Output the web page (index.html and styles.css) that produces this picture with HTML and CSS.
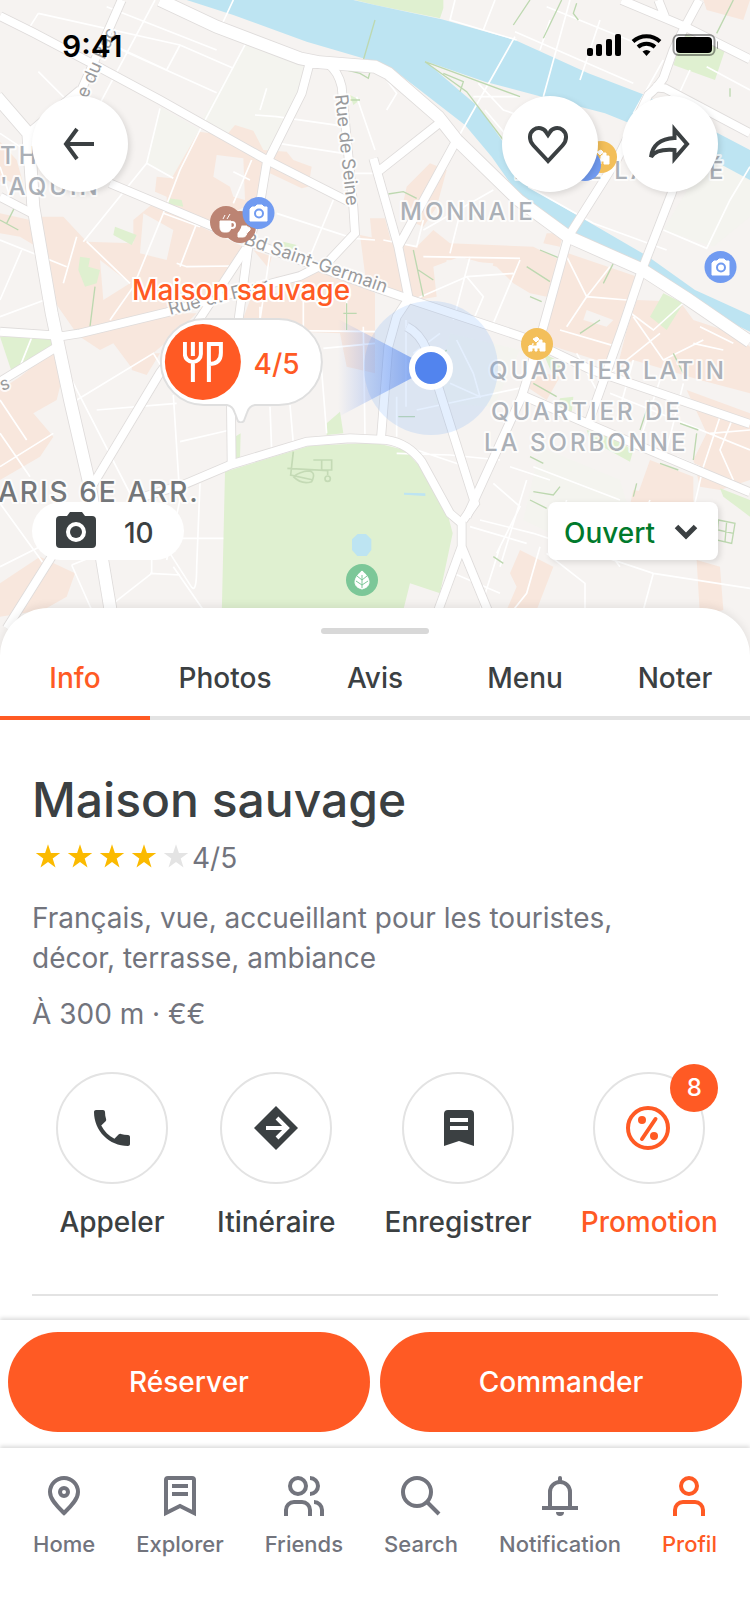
FILE: index.html
```html
<!DOCTYPE html>
<html lang="fr">
<head>
<meta charset="utf-8">
<meta name="viewport" content="width=device-width, initial-scale=1">
<title>Maison sauvage</title>
<link rel="stylesheet" href="styles.css">
</head>
<body>
<main class="screen">
  <section class="map" aria-label="Carte">
    <svg class="map-canvas" viewBox="0 0 750 660" preserveAspectRatio="xMidYMin slice" aria-hidden="true">
      <defs>
        <g id="wide">
          <path d="M480 0 650 80 900 175 960 187 1125 200 1165 220 1315 350 1370 420 1555 600 1705 710 1925 808 2060 895 2250 1025"/>
          <path d="M-10 290 85 400 100 620 155 940 210 1200 270 1460 300 1640 335 1850"/>
        </g>
        <g id="main">
          <path d="M0 48 100 98 300 203 480 300 800 480 1060 612"/>
          <path d="M365 0 330 80 235 290M85 400 240 270"/>
          <path d="M930 185 905 280 800 490 782 600 745 740 715 965"/>
          <path d="M915 192 985 192Q1015 215 1025 260L1060 620 1065 700 985 785 900 828 700 880 500 937 240 1000 190 1008 0 995"/>
          <path d="M330 550 640 680 760 730 1125 862 1235 900 1565 1010 1775 1110 2250 1272"/>
          <path d="M738 745 600 955 480 1118 275 1460M155 1670 20 1885"/>
          <path d="M1230 890 1190 950 1165 1040 1143 1315"/>
          <path d="M400 1500 560 1450 695 1393 920 1325 1050 1315 1160 1320Q1225 1330 1265 1385L1350 1540 1385 1570"/>
          <path d="M693 1215 695 1393M1220 980Q1260 1000 1280 1050L1425 1510 1390 1560"/>
          <path d="M1385 1560V1640L1315 1830M1385 1640 1465 1835"/>
          <path d="M1400 1550 1565 1190 1630 980 1705 710 1850 480 1945 285Q1970 265 1990 235L2020 150 2055 80 2098 0"/>
          <path d="M2040 500 2015 580 1925 812 1865 990 1765 1270"/>
          <path d="M1565 1185 1765 1272 1900 1330 2250 1477"/>
          <path d="M1865 0 2055 80 2250 178M1960 262 1995 265 2250 400M1975 0 1995 50"/>
          <path d="M1125 522 1320 368M1370 420 1195 740M1120 475 1195 740 1227 900"/>
          <path d="M0 590 95 640M0 1145 180 1035"/>
        </g>
      </defs>
      <g transform="scale(.333333)">
        <rect class="land" width="2250" height="1980"/>
        <g class="campus">
          <path d="M740 125 920 190 890 290 800 470 600 370zM480 320 600 390 520 530 440 490zM1965 700 2120 400 2250 520V660L2140 745z"/>
          <path d="M1620 1340 1860 1440 1920 1640 1820 1680 1570 1560zM1350 1000 1560 1050 1480 1220 1300 1210z"/>
        </g>
        <g class="built">
          <path d="M595 395 680 405 705 375 760 392 790 450 860 455 880 480 935 500 925 560 905 565 810 520 780 600 640 665 500 620 500 590 465 575 470 530 515 535z"/>
          <path d="M0 425 50 480 75 570 20 540 0 545zM0 640 90 660 110 740 60 710 0 700z"/>
          <path d="M125 650 190 650 260 725 400 730 400 660 460 610 560 660 730 740 640 880 500 930 230 1000 160 900z"/>
          <path d="M760 750 900 800 1080 850 1125 880 1125 1120 1040 1100 1020 1000 760 990 720 980 750 900 860 870z"/>
          <path d="M1080 705 1250 740 1300 690 1350 730 1600 740 1680 780 1640 890 1590 880 1540 850 1490 800 1380 770 1300 800 1310 890 1250 900 1100 860z"/>
          <path d="M1220 560 1290 490 1340 510 1310 620 1270 680 1200 650zM1110 655 1155 655 1180 750 1120 760z"/>
          <path d="M1705 760 1925 835 1870 990 1820 1090 1600 1020 1660 900zM1640 700 1690 700 1680 740 1630 730z"/>
          <path d="M1910 900 2040 905 2080 960 2200 1000 2250 1040V1180L2100 1140 1900 1080 1850 1110 1880 990zM2110 0 2250 0 2230 60 2120 30z"/>
          <path d="M2060 1170 2250 1240V1440L2160 1470 2100 1460 2080 1380 2120 1300zM1950 1380 2080 1430 2080 1530 1990 1600 1900 1520z"/>
          <path d="M1560 1650 1660 1700 1610 1830 1520 1830 1550 1760 1530 1720zM2090 1680 2160 1700 2170 1830 2100 1850z"/>
          <path d="M0 1170 60 1130 160 1050 190 1120 170 1200 100 1240 160 1310 120 1370 0 1440z"/>
          <path d="M240 1010 500 940 590 940 530 1000 400 1110 340 1030 300 1050zM400 1060 480 1060 440 1125 395 1110z"/>
          <path d="M0 1750 120 1670 225 1720 200 1790 130 1830 0 1850zM1590 1110 1680 1130 1640 1200 1580 1160z"/>
          <path d="M1900 1470 2080 1500 2080 1580 2000 1620 1880 1560z"/>
        </g>
        <g class="land">
          <path d="M650 465 730 475 735 600 700 590 690 560 640 530zM430 640 520 690 500 780 420 760zM820 750 930 780 900 830 800 830z"/>
          <path d="M1340 780 1480 790 1460 870 1320 890zM1760 930 1840 960 1820 980 1750 960zM300 780 390 850 310 900z"/>
        </g>
        <g class="green">
          <path d="M675 1415 930 1337 1125 1328 1215 1350 1260 1400 1345 1550 1358 1600 1320 1780 1230 1750 1205 1850 665 1850z"/>
          <path d="M1065 0H1330V25L1320 55 1125 15zM2050 100 2175 150 2145 240 2020 195zM1990 880 2050 910 2000 990 1950 950z"/>
          <path d="M0 1010 155 1005 160 1040 35 1115zM345 680 410 705 395 735 340 705zM240 770 270 775 265 800 300 810 290 850 255 860 235 810z"/>
          <path d="M505 595 545 600 550 620 505 612zM1050 285 1080 300 1060 315zM705 1310 722 1300 720 1375 706 1378zM980 1270 1020 1235 1030 1300 980 1305z"/>
          <path d="M1680 1195 1720 1190 1715 1240 1670 1225zM1760 1290 1830 1310 1900 1350 1890 1385 1770 1320zM2160 1465 2250 1500V1550L2170 1490zM1630 1060 1690 1090 1660 1130z"/>
          <path d="M850 725 890 735 870 755 850 740z"/>
        </g>
        <path class="water" d="M560 0 700 45 920 125 1125 185 1175 205 1395 375 1475 470 1535 555 1565 590 1705 690 1925 805 1975 850 2085 915 2250 995V450L1935 285 1765 220 1545 120 1325 58 1125 15 1060 0z"/>
        <path class="land" d="M1275 183 1455 245 1625 290 1815 340 1895 372 2155 495 2250 545V945L2085 870 1945 770 1765 665 1585 560 1505 420 1435 320z"/>
        <path class="campus" d="M2120 470 2250 540V650L2140 740 1990 690z"/>
        <path class="water" d="M1073 1602 1098 1602 1114 1618V1650L1100 1668H1072L1056 1650V1618zM1212 1478 1276 1480V1488L1212 1484z"/>
        <g class="lane">
          <path d="M115 40 90 80M115 40 540 135 700 205M320 20 650 150M540 135 500 210 350 140M365 150 650 278M465 0 300 310M740 125 610 370 540 510 490 640 400 860 330 960"/>
          <path d="M115 215 210 310M480 325 440 490 250 725M440 490 520 535M800 265 780 330M765 345 830 350 1040 380M835 430 1030 460M1070 290 1125 450M1065 520H1125"/>
          <path d="M755 480 700 610M700 515 750 540M1000 600 930 770M830 640 1060 715 1125 720M0 720 200 800M65 750 0 900M230 710 190 850M0 950 160 890M260 725 390 850"/>
          <path d="M530 790 560 800 700 798M810 760 780 960M590 670 540 800M490 640 600 680M0 400 60 440M0 500 40 620"/>
          <path d="M700 0 665 75M1545 110 1370 420M1485 0 1450 90M1365 0 1350 60 1550 120M1640 20 1960 150M1650 60 1620 150M1710 0 1630 290M1545 95 1900 250M1800 60 1740 240M1990 180 1900 340M2070 210 2010 340M2120 200 2250 270"/>
          <path d="M1435 250 1510 330 1600 360M1420 290 1560 290M1455 330 1540 430M1585 560 1780 670M1780 670 2000 750M1990 690 2120 745 2190 600 2250 500M1160 240 1190 280 1160 330"/>
          <path d="M1390 600 1350 760M1270 690 1480 570M1150 720 1250 740 1270 660M1270 770 1560 775M1410 770 1360 960M1400 830 1540 820M1560 780 1480 970M1240 900 1400 830 1450 890 1420 960"/>
          <path d="M1700 770 1760 890 1880 900M1760 890 1700 980M1760 890 1830 800M1880 930 1960 990 2060 900M1900 950 1990 1080 2110 1020M1980 1000 1830 1120M2100 980 2200 1030M2080 1030 2170 1050"/>
          <path d="M100 1000 60 1100M0 1300 90 1430M0 1400 160 1300M0 1200 80 1320M0 1510 130 1690M0 1700 220 1590M210 1130 400 1500M290 1230 530 1210M230 1200 460 1060 540 1190"/>
          <path d="M520 1185 540 1500 500 1680M870 1215 880 1330M810 1220 815 1350M960 1050 980 1300M1090 980 1095 1310M970 1045 1125 1030M730 990 1125 995M780 920V990M910 900V990M1040 990V900"/>
          <path d="M540 1325 690 1290M600 1450 590 1700Q590 1780 575 1762L510 1660M455 1680V1720L340 1810M450 1720 540 1725M215 1695 275 1830M215 1695 290 1665M540 1615H670M520 1700 610 1830"/>
          <path d="M1190 1190V1310M1218 960V1220M1240 1060 1320 1000M1250 1230 1580 1160M1190 1360 1350 1365 1500 1380M1250 1350 1400 1400M1410 1580 1580 1630M1480 1450 1560 1520 1490 1660M1530 1400 1650 1440M1600 1400 1860 1500M1580 1440 1500 1700"/>
          <path d="M1360 1720 1500 1780M1500 1640 1440 1830M1620 1640 1580 1780 1540 1830M1640 1660 1755 1750V1830M1600 1600 1960 1720 2250 1765M1960 1720 1930 1830M1800 1620 1860 1700M1700 1500 1660 1640M1950 1500 1890 1640M2200 1250 2160 1350 2200 1440M2160 1250 2110 1400 2080 1530M2130 1300 2250 1290M2030 1370 2100 1400M1440 1560 1600 1600"/>
          <path d="M1350 1150 1440 1190 1420 1120 1370 1020M1680 990 1850 1040M1730 1060 1800 1190M1900 1080 1850 1260M1980 1140 1920 1320M2050 1150 2000 1350M1830 1180 2250 1350"/>
        </g>
        <g class="path">
          <path d="M1125 60 1090 180M1020 205 1080 220 1105 235 1110 215M1050 300H1080M0 660 55 690M45 620 20 670M285 860 270 980M1040 910V990M1030 940H1070"/>
          <path d="M1275 185 1560 290M1275 185 1400 275 1510 420M1330 220 1390 245 1380 275M1540 75 1590 0M1630 115 1685 0M1730 10 1720 40 1735 60M2150 100 2200 0M2190 265V290M1165 582 1210 575 1250 595M1240 750 1270 890M1255 810 1300 840"/>
          <path d="M1620 750 1680 775M1580 800 1650 845M1590 890 1625 905M1840 790 1810 850M1600 1150 1670 1190M1590 1370 1630 1390M1600 1475 1660 1485 1680 1460M1590 1500 1640 1525M1740 1000 1800 960M2020 1060 2050 1120M2040 1270 2095 1290M2090 1300 2080 1380M1980 1390 2035 1410M1910 1450 1900 1490M1195 1250H1245M1480 1670 1510 1690M2155 1560 2205 1570 2195 1630 2150 1620zM2180 1565 2175 1625M2155 1590 2200 1600M1340 1050 1320 1070M1950 1200 1920 1290"/>
        </g>
        <path class="track" d="M880 1355 872 1425 940 1440M862 1405 985 1412M940 1380H995V1410H965V1380M880 1430Q905 1455 935 1445Q950 1415 925 1413Q900 1415 880 1430M983 1412V1425M975 1436a8 8 0 1 0 16 0a8 8 0 1 0-16 0"/>
        <use href="#wide" class="wide-edge"/>
        <use href="#main" class="main-edge"/>
        <use href="#main" class="main-fill"/>
        <use href="#wide" class="wide-fill"/>
      </g>

      <g class="street">
        <text transform="translate(87 99) rotate(-66)">e du Bac</text>
        <text transform="translate(335 95) rotate(84)">Rue de Seine</text>
        <text transform="translate(243 244) rotate(19)">Bd Saint-Germain</text>
        <text transform="translate(170 315) rotate(-14)">Rue du Four</text>
        <text transform="translate(2 391) rotate(-20)">s</text>
      </g>
      <g class="area">
        <text x="0" y="164">TH</text>
        <text x="0" y="195">'AQUIN</text>
        <text x="400" y="220">MONNAIE</text>
        <text x="514" y="179">ÎLE DE LA CITÉ</text>
        <text x="489" y="379">QUARTIER LATIN</text>
        <text x="491" y="420">QUARTIER DE</text>
        <text x="484" y="451">LA SORBONNE</text>
      </g>
      <text class="district" x="-2" y="502">ARIS 6E ARR.</text>

      <g class="poi">
        <circle class="brown" cx="240" cy="227" r="16"/>
        <path d="M238 226h9v5q0 6-4 6h-5zM247 227q4 0 3 3l-3 3"/>
        <circle class="brown" cx="226" cy="222" r="16"/>
        <path d="M220 221h11v5q0 6-4 6h-3q-4 0-4-5zM223 219l2-4M227 219l3-5"/>
        <circle class="cup-handle" cx="232" cy="225" r="3"/>
        <g id="photo-pin">
          <circle class="blue" cx="258.500" cy="213" r="16"/>
          <path d="M252 207h3l2-2h5l2 2h3v14h-17v-12z"/>
          <circle class="lens" cx="259" cy="213.500" r="4"/>
        </g>
        <use href="#photo-pin" x="462" y="54"/>
        <g id="museum-pin">
          <circle class="amber" cx="537" cy="344" r="16"/>
          <path d="M529 352v-6l4-1v-2M533 339l4-2 2 2-3 3z"/>
          <path d="M529 351v-5h8v-3l2-1v-2h3v3h3v8h-5v-3h-3v3h-2v-3h-3v3z"/>
        </g>
        <use href="#museum-pin" x="64" y="-187"/>
        <circle class="blue" cx="585" cy="165" r="16"/>
        <circle class="leaf" cx="362" cy="580" r="16"/>
        <path d="M362 571c5 4 7 8 7 11 0 4-3 6-7 7-4-1-7-3-7-7 0-3 2-7 7-11z"/>
        <path class="vein" d="M362 575v13M362 580l-5-4M362 580l5-4M362 585l-6-4M362 585l6-4"/>
      </g>

      <defs>
        <linearGradient id="beam"><stop offset="0" stop-color="#5284ee" stop-opacity="0"/><stop offset="1" stop-color="#5284ee" stop-opacity=".75"/></linearGradient>
      </defs>
      <circle class="accuracy" cx="431" cy="368" r="67"/>
      <path fill="url(#beam)" d="M338 319 431 368 338 417z"/>
      <circle class="position" cx="431" cy="368" r="19"/>
    </svg>

    <header class="status">
      <time>9:41</time>
      <svg width="132" height="24" viewBox="0 0 132 24" role="img" aria-label="Réseau, Wi-Fi, batterie">
        <rect x="1" y="14" width="6" height="8" rx="2"/><rect x="10" y="10" width="6" height="12" rx="2"/><rect x="20" y="5" width="6" height="17" rx="2"/><rect x="29" y="0" width="6" height="22" rx="2"/>
        <g class="arcs"><path d="M47 7.500a20 20 0 0 1 27 0"/><path d="M52 13a13 13 0 0 1 17 0"/></g>
        <path d="M56.500 17.500a6.500 6.500 0 0 1 8 0l-4 4.500z"/>
        <rect class="cell" x="87.500" y="1" width="41" height="20" rx="5"/><rect x="90" y="3" width="36" height="16" rx="4"/><path class="cap" d="M131 7c3 2 3 6 0 8z"/>
      </svg>
    </header>

    <div class="toolbar">
      <button class="round" type="button" aria-label="Retour"><svg class="icon" viewBox="0 0 40 40"><path d="M34 20H7M17 5 6 20l11 15"/></svg></button>
      <div class="toolbar-end">
        <button class="round" type="button" aria-label="Favori"><svg class="icon" viewBox="2 0 40 40"><path d="M20 37 5.500 21.500C.500 16 1 9 5.500 5.800 10 2.600 16 4 18 8l2 3 2-3c2-4 8-5.400 12.500-2.200 4.500 3.200 5 10.200 0 15.700z"/></svg></button>
        <button class="round" type="button" aria-label="Partager"><svg class="icon" viewBox="2 0 40 40"><path d="M26.500 5.500 39 20 26.500 34.500V26C14 25 6 28 3 33 4 22 12 14.500 26.500 14z"/></svg></button>
      </div>
    </div>

    <div class="place">
      <span class="place-name">Maison sauvage</span>
      <button class="bubble" type="button" aria-label="Maison sauvage, 4/5">
        <svg class="bubble-shape" viewBox="0 0 163 105" aria-hidden="true"><path d="M44 1h75a43 43 0 0 1 0 86H95q-6 1-8 8l-3 8q-3 3-6 0l-3-8q-2-7-8-8H44a43 43 0 0 1 0-86z"/></svg>
        <span class="bubble-disc"><svg viewBox="0 0 40 40" aria-hidden="true"><path d="M2 0v12a8 8 0 0 0 16 0V0M10 0v14M10 20v20M26 40V2h12v9c0 7-4 11-12 11"/></svg></span>
        <span class="bubble-score">4/5</span>
      </button>
    </div>

    <div class="map-foot">
      <button class="photos" type="button" aria-label="10 photos">
        <svg viewBox="0 0 40 36" aria-hidden="true"><path fill-rule="evenodd" d="M4 4h7l3-4h12l3 4h7a4 4 0 0 1 4 4v24a4 4 0 0 1-4 4H4a4 4 0 0 1-4-4V8a4 4 0 0 1 4-4zM20 10a10 10 0 1 0 0 20 10 10 0 1 0 0-20z"/><circle cx="20" cy="20" r="6"/></svg>
        <span>10</span>
      </button>
      <div class="hours">
        <select aria-label="Horaires"><option>Ouvert</option><option>Fermé</option></select>
        <svg viewBox="0 0 24 24" aria-hidden="true"><path d="M2.500 6.500 12 16l9.500-9.500"/></svg>
      </div>
    </div>
  </section>

  <section class="sheet">
    <div class="handle"></div>
    <nav class="tabs" aria-label="Rubriques">
      <a class="tab tab-on" href="#info" aria-current="page">Info</a>
      <a class="tab" href="#photos">Photos</a>
      <a class="tab" href="#avis">Avis</a>
      <a class="tab" href="#menu">Menu</a>
      <a class="tab" href="#noter">Noter</a>
    </nav>

    <div class="details" id="info">
      <h1>Maison sauvage</h1>
      <div class="rating">
        <svg class="stars" viewBox="0 0 160 40" aria-hidden="true">
          <defs><path id="star" d="M16 6.200 18.900 15H28.200L20.700 20.500 23.500 29.400 16 23.900 8.500 29.400 11.300 20.500 3.800 15H13.100z"/></defs>
          <use href="#star"/><use href="#star" x="32"/><use href="#star" x="64"/><use href="#star" x="96"/><use class="star-off" href="#star" x="128"/>
        </svg>
        <span>4/5</span>
      </div>
      <p class="about">Français, vue, accueillant pour les touristes, décor, terrasse, ambiance</p>
      <p class="distance">À 300 m · €€</p>

      <div class="actions">
        <button class="action" type="button">
          <span class="ring"><svg viewBox="0 0 48 48" aria-hidden="true"><path transform="scale(2)" d="M6.620 10.790c1.440 2.830 3.760 5.140 6.590 6.590l2.200-2.200c.270-.270.670-.360 1.020-.240 1.120.370 2.330.570 3.570.570.550 0 1 .450 1 1V20c0 .550-.450 1-1 1C10.610 21 3 13.390 3 4c0-.550.450-1 1-1h3.500c.550 0 1 .450 1 1 0 1.250.200 2.450.570 3.570.110.350.030.740-.250 1.020z"/></svg></span>
          <span>Appeler</span>
        </button>
        <button class="action" type="button">
          <span class="ring"><svg viewBox="0 0 48 48" aria-hidden="true"><path d="M24 2 46 24 24 46 2 24z"/><path class="cut" d="M14 24h21M25 14l10 10-10 10"/></svg></span>
          <span>Itinéraire</span>
        </button>
        <button class="action" type="button">
          <span class="ring"><svg viewBox="0 0 48 48" aria-hidden="true"><path d="M10 42V10a4 4 0 0 1 4-4h22a4 4 0 0 1 4 4v32l-15-5z"/><path class="cut" d="M16 16h18M16 24h18"/></svg></span>
          <span>Enregistrer</span>
        </button>
        <button class="action action-hot" type="button">
          <span class="ring"><svg viewBox="1 0 48 48" aria-hidden="true"><circle class="line" cx="24" cy="24" r="20"/><path class="line" d="M31.500 15 18 35"/><circle cx="18" cy="16" r="4"/><circle cx="30" cy="32" r="4"/></svg><span class="badge">8</span></span>
          <span>Promotion</span>
        </button>
      </div>
      <hr>
    </div>
  </section>

  <div class="order">
    <button type="button">Réserver</button>
    <button type="button">Commander</button>
  </div>

  <nav class="bottom" aria-label="Navigation">
    <a href="#home"><svg class="icon" viewBox="0 0 40 40" aria-hidden="true"><path d="M20 37C15 32 6 24 6 16a14 14 0 0 1 28 0c0 8-9 16-14 21z"/><circle cx="20" cy="16" r="4"/></svg>Home</a>
    <a href="#explorer"><svg class="icon" viewBox="0 0 40 40" aria-hidden="true"><path d="M6 37V4q0-2 2-2h24q2 0 2 2v33l-14-7zM12 10h16M12 18h16"/></svg>Explorer</a>
    <a href="#friends"><svg class="icon" viewBox="0 0 40 40" aria-hidden="true"><circle cx="14" cy="10" r="8"/><path d="M26 2a8 8 0 0 1 0 16M2 40v-6a8 8 0 0 1 8-8h8a8 8 0 0 1 8 8v6M30 26a8 8 0 0 1 8 8v6"/></svg>Friends</a>
    <a href="#search"><svg class="icon" viewBox="0 0 40 40" aria-hidden="true"><circle cx="16" cy="16" r="14"/><path d="M26 26l12 12"/></svg>Search</a>
    <a href="#notification"><svg class="icon" viewBox="0 0 40 40" aria-hidden="true"><path d="M10 32V16a10 10 0 0 1 20 0v16M2 32h36"/><path d="M20 2v4" stroke-linecap="round"/><path class="solid" d="M16 36h8a4 4 0 0 1-8 0z"/></svg>Notification</a>
    <a class="here" href="#profil" aria-current="page"><svg class="icon" viewBox="0 0 40 40" aria-hidden="true"><circle cx="20" cy="10" r="8"/><path d="M6 40v-6a8 8 0 0 1 8-8h12a8 8 0 0 1 8 8v6"/></svg>Profil</a>
  </nav>
</main>
</body>
</html>
```

FILE: styles.css
```css
:root {
  --ink: #3b4042;
  --muted: #72747d;
  --accent: #ff5a24;
  --rule: #e3e3e3;
}

* { box-sizing: border-box; }

body {
  margin: 0;
  background: #fff;
  color: var(--ink);
  font-family: Inter, "Liberation Sans", sans-serif;
  font-size: 28px;
  font-weight: 500;
  line-height: 40px;
}

button, select {
  border: 0;
  padding: 0;
  background: none;
  color: inherit;
  font: inherit;
}

a { color: inherit; text-decoration: none; }
svg { display: block; }

.screen {
  display: flex;
  flex-direction: column;
  min-height: 100vh;
}

/* Map */
.map {
  position: relative;
  display: flex;
  flex-direction: column;
  height: 656px;
  overflow: hidden;
}

.map-canvas {
  position: absolute;
  inset: 0;
  width: 100%;
  height: 660px;
}

.land { fill: #f6f3f1; }
.campus { fill: #f4f4ef; }
.built { fill: #f8e7dd; }
.green { fill: #dff0d0; }
.water { fill: #bde4f2; }
.lane { fill: none; stroke: #fff; stroke-width: 5; }
.path { fill: none; stroke: #bdd8b0; stroke-width: 4; }
.track { fill: none; stroke: #c4dab5; stroke-width: 5; }
.wide-edge { fill: none; stroke: #dfdcdb; stroke-width: 41; }
.wide-fill { fill: none; stroke: #fff; stroke-width: 36; }
.main-edge { fill: none; stroke: #dfdcdb; stroke-width: 29; }
.main-fill { fill: none; stroke: #fff; stroke-width: 24; }

.street, .area, .district {
  stroke: #fff;
  stroke-opacity: .8;
  stroke-width: 4;
  stroke-linejoin: round;
  paint-order: stroke;
}

.street { fill: #9a9b9d; font-size: 18px; font-weight: 400; }
.area { fill: #abb0b7; font-size: 24px; letter-spacing: 3px; }
.district { fill: #74777a; font-size: 28px; letter-spacing: 2px; }

.poi path { fill: #fff; stroke: #fff; }
.poi .brown { fill: #bc8473; }
.poi .blue { fill: #719bf1; }
.poi .amber { fill: #f3bf5a; }
.poi .leaf { fill: #7cc798; }
.poi .lens { fill: #fff; stroke: #719bf1; stroke-width: 2; }
.poi .cup-handle { fill: none; stroke: #fff; stroke-width: 2; }
.poi .vein { fill: none; stroke: #7cc798; }

.accuracy { fill: #76b0fa; fill-opacity: .2; }
.position { fill: #5284ee; stroke: #fff; stroke-width: 6; }

.status {
  position: relative;
  display: flex;
  justify-content: space-between;
  align-items: center;
  height: 96px;
  padding: 0 32px 4px 62px;
  color: #000;
  font-size: 30px;
  font-weight: 600;
}

.status .arcs { fill: none; stroke: #000; stroke-width: 4; }
.status .cell { fill: none; stroke: #000; stroke-opacity: .4; stroke-width: 2; }
.status .cap { fill-opacity: .4; }

.toolbar {
  position: relative;
  display: flex;
  justify-content: space-between;
  padding: 0 32px;
}

.toolbar-end { display: flex; gap: 24px; }

.round {
  display: grid;
  place-items: center;
  width: 96px;
  height: 96px;
  border-radius: 50%;
  background: #fff;
  box-shadow: 2px 2px 6px rgba(0, 0, 0, .12);
}

.icon {
  width: 40px;
  height: 40px;
  overflow: visible;
  fill: none;
  stroke: currentColor;
  stroke-width: 4;
}

.icon .solid { fill: currentColor; stroke: none; }

/* Pin placed on the map canvas */
.place {
  position: absolute;
  top: 270px;
  left: calc(50% - 134px);
  display: flex;
  flex-direction: column;
  align-items: center;
  gap: 8px;
  color: var(--accent);
  transform: translateX(-50%);
}

.place-name {
  white-space: nowrap;
  -webkit-text-stroke: 4px #fff;
  paint-order: stroke fill;
}

.bubble {
  position: relative;
  display: flex;
  align-items: center;
  gap: 13px;
  width: 163px;
  height: 105px;
  padding: 0 0 17px 5px;
}

.bubble-shape {
  position: absolute;
  inset: 0;
  fill: #fff;
  stroke: #dfdfdf;
  stroke-width: 2;
}

.bubble-disc {
  position: relative;
  display: grid;
  place-items: center;
  width: 76px;
  height: 76px;
  border-radius: 50%;
  background: var(--accent);
}

.bubble-disc svg {
  width: 40px;
  height: 40px;
  fill: none;
  stroke: #fff;
  stroke-width: 4;
}

.bubble-score { position: relative; padding-top: 4px; }

.map-foot {
  position: relative;
  display: flex;
  justify-content: space-between;
  margin-top: auto;
  padding: 0 32px 96px;
}

.photos {
  display: flex;
  align-items: center;
  gap: 28px;
  height: 58px;
  padding: 4px 30px 0 24px;
  border-radius: 29px;
  background: #fff;
}

.photos svg { width: 40px; height: 36px; fill: var(--ink); margin-bottom: 6px; }

.hours { position: relative; display: flex; }

.hours select {
  width: 170px;
  height: 58px;
  padding: 4px 16px 0;
  border-radius: 8px;
  background: #fff;
  box-shadow: 2px 2px 6px rgba(0, 0, 0, .12);
  color: #007a2c;
  appearance: none;
}

.hours svg {
  position: absolute;
  top: 18px;
  right: 20px;
  width: 24px;
  height: 24px;
  fill: none;
  stroke: var(--ink);
  stroke-width: 5;
  pointer-events: none;
}

/* Sheet */
.sheet {
  position: relative;
  flex: 1;
  margin-top: -48px;
  border-radius: 48px 48px 0 0;
  background: #fff;
  box-shadow: 0 -2px 8px rgba(0, 0, 0, .08);
}

.sheet::before { content: ""; display: table; }

.handle {
  width: 108px;
  height: 6px;
  margin: 20px auto 0;
  border-radius: 3px;
  background: #d8d8d8;
}

.tabs {
  display: grid;
  grid-template-columns: repeat(5, 1fr);
}

.tab {
  padding: 24px 0 18px;
  border-bottom: 4px solid var(--rule);
  text-align: center;
}

.tab-on { border-color: var(--accent); color: var(--accent); }

.details { padding: 48px 32px 24px; }

h1 {
  margin: 0 0 6px;
  font-size: 48px;
  font-weight: 500;
  line-height: 64px;
}

.rating {
  display: flex;
  align-items: center;
  color: var(--muted);
  font-weight: 400;
}

.stars { width: 160px; height: 40px; fill: #fbba00; }
.star-off { fill: #e4e4e4; }

.about, .distance { margin: 0; color: var(--muted); font-weight: 400; }
.about { max-width: 620px; margin-top: 20px; }
.distance { margin-top: 16px; }

.actions {
  display: flex;
  justify-content: space-between;
  margin-top: 38px;
  padding-left: 24px;
}

.action {
  display: flex;
  flex-direction: column;
  align-items: center;
  gap: 18px;
  min-width: 112px;
}

.action-hot { color: var(--accent); }

.ring {
  position: relative;
  display: grid;
  place-items: center;
  width: 112px;
  height: 112px;
  border: 2px solid var(--rule);
  border-radius: 50%;
}

.ring svg { width: 48px; height: 48px; fill: currentColor; }
.ring .cut { fill: none; stroke: #fff; stroke-width: 4; }
.ring .line { fill: none; stroke: currentColor; stroke-width: 4; stroke-linecap: round; }

.badge {
  position: absolute;
  top: -10px;
  right: -15px;
  width: 48px;
  height: 48px;
  border-radius: 50%;
  background: var(--accent);
  color: #fff;
  font-size: 24px;
  line-height: 48px;
  text-align: center;
}

hr {
  height: 2px;
  margin: 52px 0 0;
  border: 0;
  background: var(--rule);
}

.order {
  position: relative;
  display: grid;
  grid-template-columns: 1fr 1fr;
  gap: 10px;
  padding: 12px 8px 16px;
  background: #fff;
  box-shadow: 0 -2px 4px rgba(0, 0, 0, .14);
}

.order button {
  height: 100px;
  border-radius: 50px;
  background: var(--accent);
  color: #fff;
}

.bottom {
  position: relative;
  display: flex;
  justify-content: space-between;
  padding: 28px 33px 64px;
  background: #fff;
  box-shadow: 0 -2px 4px rgba(0, 0, 0, .14);
  color: var(--muted);
  font-size: 22px;
}

.bottom a {
  display: flex;
  flex-direction: column;
  align-items: center;
  gap: 8px;
}

.bottom .here { color: var(--accent); }
```
